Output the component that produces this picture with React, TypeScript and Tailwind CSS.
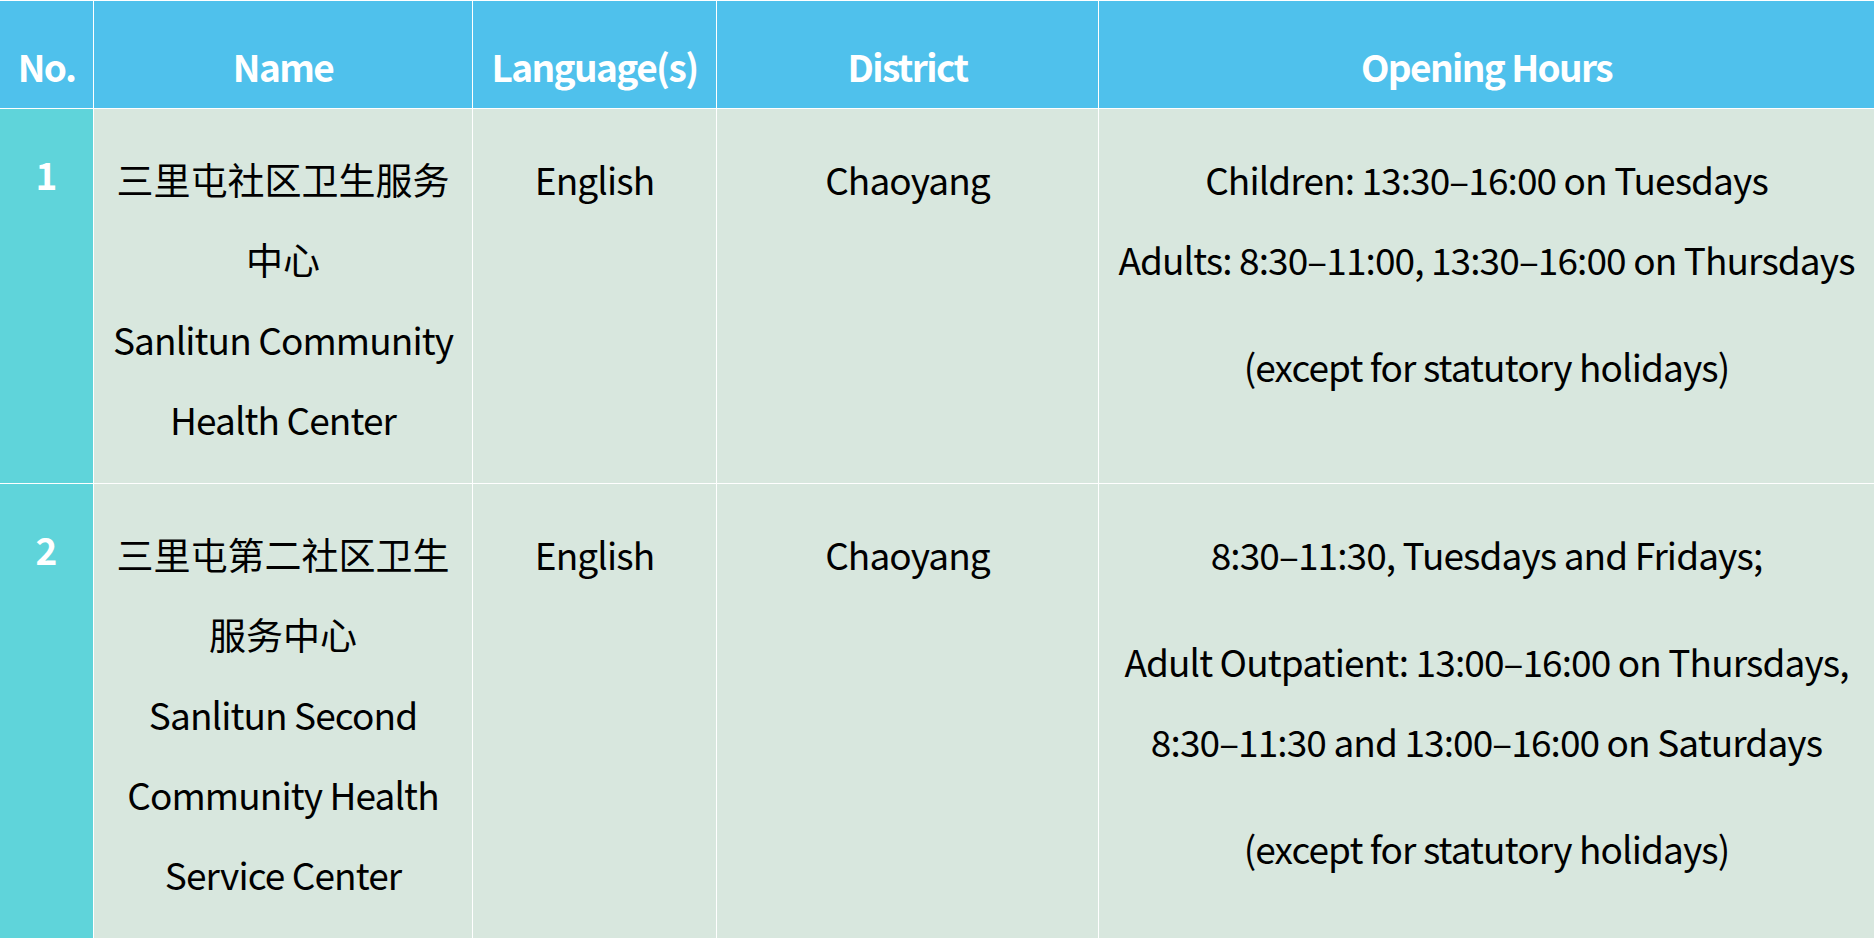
import React from 'react';

interface Clinic {
  no: number;
  name: string[];
  language: string;
  district: string;
  hours: string[][];
}

const clinics: Clinic[] = [
  {
    no: 1,
    name: ['三里屯社区卫生服务', '中心', 'Sanlitun Community', 'Health Center'],
    language: 'English',
    district: 'Chaoyang',
    hours: [
      ['Children: 13:30–16:00 on Tuesdays', 'Adults: 8:30–11:00, 13:30–16:00 on Thursdays'],
      ['(except for statutory holidays)'],
    ],
  },
  {
    no: 2,
    name: ['三里屯第二社区卫生', '服务中心', 'Sanlitun Second', 'Community Health', 'Service Center'],
    language: 'English',
    district: 'Chaoyang',
    hours: [
      ['8:30–11:30, Tuesdays and Fridays;'],
      ['Adult Outpatient: 13:00–16:00 on Thursdays,', '8:30–11:30 and 13:00–16:00 on Saturdays'],
      ['(except for statutory holidays)'],
    ],
  },
];

const headers = ['No.', 'Name', 'Language(s)', 'District', 'Opening Hours'];

const cell = 'bg-[#d8e7de] pt-[30px] pb-[24px] text-center text-black';
const isCjk = (s: string) => /[\u4e00-\u9fff]/.test(s);

const App: React.FC = () => {
  return (
    <div
      className="w-[1875px] h-[938px] overflow-hidden bg-white pt-px pr-px text-[37px] leading-[80px]"
      style={{ fontFamily: '"Noto Sans CJK SC", "Noto Sans", sans-serif' }}
    >
      <div className="grid grid-cols-[93px_378px_243px_381px_1fr] gap-px">
        {headers.map((h) => (
          <div
            key={h}
            className="bg-[#4fc1ec] h-[107px] pt-[25px] text-center font-bold text-white tracking-[-1.6px] whitespace-nowrap"
          >
            {h}
          </div>
        ))}

        {clinics.map((c) => (
          <React.Fragment key={c.no}>
            <div className="bg-[#5fd4da] pt-[25px] text-center font-bold text-white">{c.no}</div>
            <div className={cell}>
              {c.name.map((line) => (
                <div
                  key={line}
                  className={isCjk(line) ? 'whitespace-nowrap' : 'whitespace-nowrap tracking-[-0.9px]'}
                >
                  {line}
                </div>
              ))}
            </div>
            <div className={cell + ' tracking-[-0.9px]'}>{c.language}</div>
            <div className={cell + ' tracking-[-0.9px]'}>{c.district}</div>
            <div className={cell + ' tracking-[-0.9px]'}>
              {c.hours.map((para, i) => (
                <div key={i} className={i > 0 ? 'mt-[27px]' : ''}>
                  {para.map((line) => (
                    <div key={line} className="whitespace-nowrap">
                      {line}
                    </div>
                  ))}
                </div>
              ))}
            </div>
          </React.Fragment>
        ))}
      </div>
    </div>
  );
};

export default App;
